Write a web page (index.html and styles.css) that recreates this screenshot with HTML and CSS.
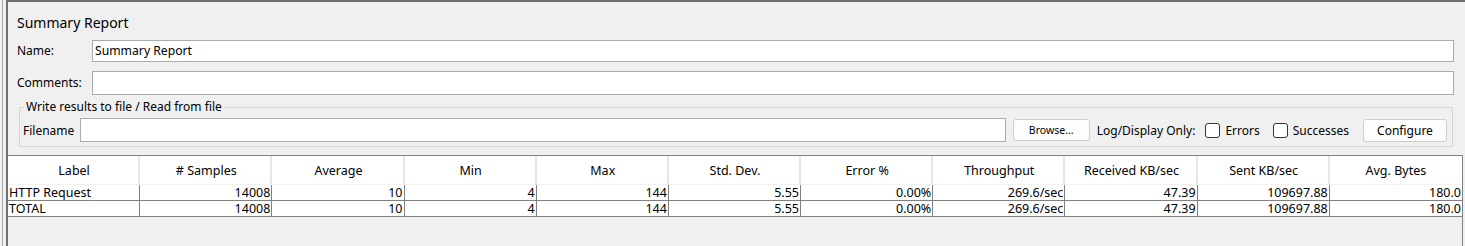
FILE: index.html
```html
<!DOCTYPE html>
<html>
<head>
<meta charset="utf-8">
<title>Summary Report</title>
<link rel="stylesheet" href="styles.css">
</head>
<body>
<div class="frame">
  <div class="panel">
    <div class="title">Summary Report</div>
    <div class="form-row name-row">
      <label class="form-label">Name:</label>
      <div class="text-field name-field">Summary Report</div>
    </div>
    <div class="form-row comments-row">
      <label class="form-label">Comments:</label>
      <div class="text-field comments-field"></div>
    </div>
    <fieldset class="group">
      <legend class="group-legend">Write results to file / Read from file</legend>
      <div class="file-row">
        <span class="file-label">Filename</span>
        <div class="text-field file-field"></div>
        <button class="btn btn-browse">Browse...</button>
        <span class="log-label">Log/Display Only:</span>
        <span class="check check-errors"><span class="box"></span>Errors</span>
        <span class="check check-success"><span class="box"></span>Successes</span>
        <button class="btn btn-configure">Configure</button>
      </div>
    </fieldset>
    <div class="table-pane">
      <table class="results">
        <thead>
          <tr>
            <th>Label</th><th># Samples</th><th>Average</th><th>Min</th><th>Max</th><th>Std. Dev.</th><th>Error %</th><th>Throughput</th><th>Received KB/sec</th><th>Sent KB/sec</th><th>Avg. Bytes</th>
          </tr>
        </thead>
        <tbody>
          <tr>
            <td class="txt">HTTP Request</td><td>14008</td><td>10</td><td>4</td><td>144</td><td>5.55</td><td>0.00%</td><td>269.6/sec</td><td>47.39</td><td>109697.88</td><td>180.0</td>
          </tr>
          <tr>
            <td class="txt">TOTAL</td><td>14008</td><td>10</td><td>4</td><td>144</td><td>5.55</td><td>0.00%</td><td>269.6/sec</td><td>47.39</td><td>109697.88</td><td>180.0</td>
          </tr>
        </tbody>
      </table>
    </div>
  </div>
</div>
</body>
</html>
```

FILE: styles.css
```css
* { box-sizing: border-box; }

html, body {
  margin: 0;
  padding: 0;
  height: 100%;
  background: #f0f0f0;
  font-family: "Noto Sans", "Open Sans", sans-serif;
  font-size: 12px;
  color: #000;
  overflow: hidden;
}

.frame {
  height: 100%;
  margin-left: 2px;
  border-left: 1px solid #a8a8a8;
  padding-left: 3px;
}

.panel {
  height: 100%;
  border-left: 2px solid #6f6f6f;
  border-top: 2px solid #6f6f6f;
  display: flex;
  flex-direction: column;
  padding-top: 11px;
}

.title {
  font-size: 14px;
  line-height: 20px;
  padding-left: 9px;
}

.form-row {
  display: flex;
  align-items: center;
  padding-left: 9px;
  padding-right: 11px;
}

.name-row { margin-top: 7px; }
.comments-row { margin-top: 9px; }

.form-label {
  width: 75px;
  flex: none;
  line-height: 16px;
}

.text-field {
  flex: 1;
  background: #fff;
  border: 1px solid #ababab;
  font-size: 12.2px;
  line-height: 20px;
  padding-left: 2px;
}

.name-field { height: 22px; }
.comments-field { height: 24px; }

.group {
  margin: 5px 12px 8px 11px;
  padding: 4px 5px 4px 3px;
  border: 1px solid #d6d6d6;
  min-width: 0;
}

.group-legend {
  font-size: 12px;
  line-height: 14px;
  padding: 0 2px;
  margin-left: 1px;
}

.file-row {
  display: flex;
  align-items: center;
  height: 24px;
}

.file-label {
  width: 57px;
  flex: none;
}

.file-field {
  height: 24px;
}

.btn {
  font-family: "Noto Sans", "Open Sans", sans-serif;
  background: #fdfdfd;
  border: 1px solid #cdcdcd;
  border-radius: 3px;
  color: #000;
  padding: 0;
  flex: none;
}

.btn-browse {
  width: 77px;
  height: 22px;
  margin-left: 7px;
  font-size: 10.5px;
}

.btn-configure {
  width: 84px;
  height: 23px;
  margin-left: 14px;
  font-size: 12px;
}

.log-label {
  margin-left: 7px;
  flex: none;
}

.check {
  display: flex;
  align-items: center;
  flex: none;
}

.check-errors { margin-left: 10px; }
.check-success { margin-left: 13px; }

.box {
  width: 15px;
  height: 15px;
  border: 1px solid #333;
  border-radius: 3px;
  background: #fff;
  margin-right: 5px;
}

.table-pane {
  flex: 1;
  border-top: 1px solid #828282;
  border-right: 1px solid #828282;
  margin-right: 2px;
}

.results {
  width: 100%;
  table-layout: fixed;
  border-collapse: separate;
  border-spacing: 0;
  font-size: 12.5px;
}

.results th {
  background: #fff;
  font-weight: normal;
  height: 29px;
  padding: 1px 0 0;
  line-height: 26px;
  text-align: center;
  box-shadow: inset -2px 0 0 #e6e6e6;
  border-bottom: 1px solid #f2f2f2;
  white-space: nowrap;
  overflow: hidden;
}

.results th:last-child { box-shadow: none; }

.results td {
  background: #fff;
  height: 16px;
  line-height: 15px;
  padding: 0 1px 0 1px;
  text-align: right;
  border-right: 1px solid #808080;
  border-bottom: 1px solid #808080;
  white-space: nowrap;
  overflow: hidden;
}

.results td:last-child { border-right: none; }

.results td.txt { text-align: left; }
```
